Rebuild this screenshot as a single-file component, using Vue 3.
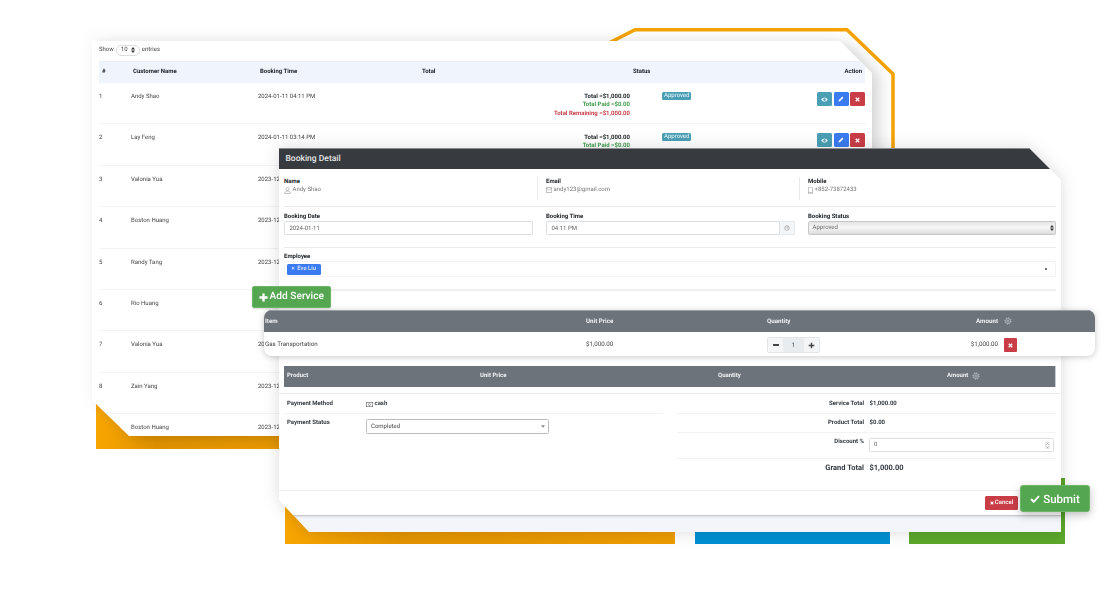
<script setup>
const rows = [
  { n: 1, name: 'Andy Shao', time: '2024-01-11 04:11 PM', full: true },
  { n: 2, name: 'Lay Feng', time: '2024-01-11 03:14 PM', full: true },
  { n: 3, name: 'Valonia Yua', time: '2023-12-28 05:20 PM' },
  { n: 4, name: 'Boston Huang', time: '2023-12-27 02:41 PM' },
  { n: 5, name: 'Randy Tang', time: '2023-12-26 11:05 AM' },
  { n: 6, name: 'Rio Huang', time: '2023-12-22 03:32 PM' },
  { n: 7, name: 'Valonia Yua', time: '2023-12-21 10:48 AM' },
  { n: 8, name: 'Zain Yang', time: '2023-12-20 04:15 PM' },
  { n: '', name: 'Boston Huang', time: '2023-12-19 01:27 PM' }
]
</script>

<template>
  <div class="stage">
    <svg class="decor" width="1111" height="615" viewBox="0 0 1111 615" aria-hidden="true">
      <defs>
        <linearGradient id="org" x1="0" y1="0" x2="1" y2="0">
          <stop offset="0" stop-color="#f7a600" />
          <stop offset="0.3" stop-color="#e39300" />
          <stop offset="1" stop-color="#ed9c00" />
        </linearGradient>
      </defs>
      <path d="M609 43 L635 29.800 L847 29.800 L893 74 L893 160" fill="none" stroke="#f5a300" stroke-width="3.500" />
      <rect x="96" y="395" width="200" height="54" fill="url(#org)" />
      <rect x="285" y="495" width="390" height="49" fill="url(#org)" />
      <rect x="695" y="520" width="195" height="24" fill="#0090d2" />
      <rect x="909" y="478" width="156" height="66" fill="#5ca72b" />
    </svg>

    <div class="win win-back">
      <div class="back-panel">
        <div class="show-row">
          <span>Show</span>
          <span class="len">10 <svg width="4" height="6" viewBox="0 0 4 6"><path d="M2 0 L4 2.400 H0Z M2 6 L0 3.600 H4Z" fill="#333" /></svg></span>
          <span>entries</span>
        </div>
        <div class="t-row t-head">
          <span class="c-n">#</span>
          <span class="c-name">Customer Name</span>
          <span class="c-time">Booking Time</span>
          <span class="c-total">Total</span>
          <span class="c-status">Status</span>
          <span class="c-act">Action</span>
        </div>
        <div v-for="r in rows" :key="r.name + r.n" class="t-row t-body">
          <span class="c-n">{{ r.n }}</span>
          <span class="c-name">{{ r.name }}</span>
          <span class="c-time">{{ r.time }}</span>
          <template v-if="r.full">
            <div class="c-total sums">
              <b>Total =$1,000.00</b>
              <b class="ok">Total Paid =$0.00</b>
              <b class="bad">Total Remaining =$1,000.00</b>
            </div>
            <div class="c-status"><span class="badge">Approved</span></div>
            <div class="c-act btns">
              <span class="ib teal"><svg width="7" height="5" viewBox="0 0 16 12"><path d="M8 1C4.500 1 1.800 3.200 0 6c1.800 2.800 4.500 5 8 5s6.200-2.200 8-5c-1.800-2.800-4.500-5-8-5zm0 8a3 3 0 110-6 3 3 0 010 6z" fill="#e8f3f6" /></svg></span>
              <span class="ib blue"><svg width="6" height="6" viewBox="0 0 12 12"><path d="M1 11l.7-3L8.500 1.200l2.300 2.300L4 10.300z" fill="#fff" /></svg></span>
              <span class="ib red"><svg width="5" height="5" viewBox="0 0 10 10"><path d="M1.500 1.500l7 7M8.500 1.500l-7 7" stroke="#fff" stroke-width="2.600" /></svg></span>
            </div>
          </template>
        </div>
      </div>
    </div>

    <div class="win win-front">
      <div class="front-panel">
        <div class="front-head">Booking Detail</div>
        <div class="front-white">
          <div class="info grid3">
            <div class="cell">
              <b>Name</b>
              <span class="val"><svg width="7" height="7" viewBox="0 0 14 14"><circle cx="7" cy="4" r="3" fill="none" stroke="#888" /><path d="M1 13c0-3 2.500-4.500 6-4.500s6 1.500 6 4.500z" fill="none" stroke="#888" /></svg>Andy Shao</span>
            </div>
            <div class="cell">
              <b>Email</b>
              <span class="val"><svg width="6" height="6" viewBox="0 0 12 12"><rect x=".5" y="1.500" width="11" height="9" fill="none" stroke="#888" /><path d="M.5 2l5.500 4.500L11.500 2" fill="none" stroke="#888" /></svg>andy123@gmail.com</span>
            </div>
            <div class="cell last">
              <b>Mobile</b>
              <span class="val"><svg width="5" height="7" viewBox="0 0 10 14"><rect x="1" y=".5" width="8" height="13" rx="1" fill="none" stroke="#888" /><path d="M1 11h8" stroke="#888" /></svg>+852-73872433</span>
            </div>
          </div>
          <div class="hr hr-a"></div>

          <div class="grid3 fields">
            <div class="field">
              <b>Booking Date</b>
              <div class="inp">2024-01-11</div>
            </div>
            <div class="field">
              <b>Booking Time</b>
              <div class="group">
                <div class="inp flat">04:11 PM</div>
                <span class="addon"><svg width="6" height="6" viewBox="0 0 12 12"><circle cx="6" cy="6" r="4.500" fill="none" stroke="#888" stroke-width="1.200" /><path d="M6 3.500V6h2.200" fill="none" stroke="#888" /></svg></span>
              </div>
            </div>
            <div class="field last">
              <b>Booking Status</b>
              <div class="inp sel">Approved<svg width="4" height="6" viewBox="0 0 4 6"><path d="M2 0 L4 2.400 H0Z M2 6 L0 3.600 H4Z" fill="#333" /></svg></div>
            </div>
          </div>
          <div class="hr hr-b"></div>

          <div class="emp">
            <b>Employee</b>
            <div class="emp-box"><span class="chip"><i>×</i>Eve Liu</span><span class="dot"></span></div>
          </div>
          <div class="hr hr-c"></div>

          <div class="prod-head">
            <span>Product</span>
            <span>Unit Price</span>
            <span>Quantity</span>
            <span class="amt">Amount</span>
            <svg class="gear" width="8" height="8" viewBox="0 0 16 16"><circle cx="8" cy="8" r="2" fill="none" stroke="#dfe2e5" /><circle cx="8" cy="8" r="5" fill="none" stroke="#dfe2e5" /><circle cx="8" cy="8" r="6.500" fill="none" stroke="#dfe2e5" stroke-width="1.500" stroke-dasharray="1.700 3.400" /></svg>
          </div>
          <div class="hr hr-full"></div>

          <div class="pay">
            <div class="pay-left">
              <div class="pl-row line">
                <b class="pl-label">Payment Method</b>
                <b class="pl-val"><svg width="7" height="5" viewBox="0 0 14 10"><rect x=".5" y=".5" width="13" height="9" fill="none" stroke="#444" /><circle cx="7" cy="5" r="2" fill="none" stroke="#444" /></svg>cash</b>
              </div>
              <div class="pl-row status">
                <b class="pl-label">Payment Status</b>
                <div class="inp pay-sel">Completed<svg width="4" height="3" viewBox="0 0 8 5"><path d="M0 0h8L4 5z" fill="#888" /></svg></div>
              </div>
            </div>
            <div class="pay-right">
              <div class="pr-row h19 line"><b>Service Total</b><b class="v">$1,000.00</b></div>
              <div class="pr-row h19 line"><b>Product Total</b><b class="v">$0.00</b></div>
              <div class="pr-row h26 line disc">
                <b>Discount %</b>
                <div class="inp num">0<svg width="5" height="7" viewBox="0 0 10 14"><rect x=".5" y=".5" width="9" height="13" rx="3" fill="#f4f4f4" stroke="#ccc" /><path d="M3 5l2-2 2 2M3 9l2 2 2-2" fill="none" stroke="#555" /></svg></div>
              </div>
              <div class="pr-row grand"><b>Grand Total</b><b class="v">$1,000.00</b></div>
            </div>
          </div>
          <div class="hr hr-foot"></div>
          <div class="foot">
            <span class="cancel"><svg width="4" height="4" viewBox="0 0 10 10"><path d="M1.500 1.500l7 7M8.500 1.500l-7 7" stroke="#fff" stroke-width="2.600" /></svg>Cancel</span>
          </div>
        </div>
      </div>
    </div>

    <div class="service-card">
      <div class="svc-row svc-head">
        <span>Item</span>
        <span>Unit Price</span>
        <span>Quantity</span>
        <span class="amt">Amount</span>
        <svg width="8" height="8" viewBox="0 0 16 16"><circle cx="8" cy="8" r="2" fill="none" stroke="#dfe2e5" /><circle cx="8" cy="8" r="5" fill="none" stroke="#dfe2e5" /><circle cx="8" cy="8" r="6.500" fill="none" stroke="#dfe2e5" stroke-width="1.500" stroke-dasharray="1.700 3.400" /></svg>
      </div>
      <div class="svc-row svc-body">
        <span>Gas Transportation</span>
        <span>$1,000.00</span>
        <div class="stepper">
          <span class="st-b"><i class="minus"></i></span>
          <span class="st-v">1</span>
          <span class="st-b"><svg width="7" height="7" viewBox="0 0 10 10"><path d="M5 1v8M1 5h8" stroke="#444" stroke-width="2" /></svg></span>
        </div>
        <span class="amt">$1,000.00</span>
        <span class="del"><svg width="5" height="5" viewBox="0 0 10 10"><path d="M1.500 1.500l7 7M8.500 1.500l-7 7" stroke="#fff" stroke-width="2.600" /></svg></span>
      </div>
    </div>

    <div class="float-btn add"><svg width="9" height="9" viewBox="0 0 10 10"><path d="M5 .5v9M.5 5h9" stroke="#fff" stroke-width="2.600" /></svg>Add Service</div>
    <div class="float-btn submit"><svg width="10" height="8" viewBox="0 0 12 10"><path d="M1 5l3.500 3.500L11 1.500" fill="none" stroke="#fff" stroke-width="2.400" /></svg>Submit</div>
  </div>
</template>

<style>
html, body { margin: 0; background: #fff; }
</style>

<style scoped>
.stage {
  position: relative;
  width: 1111px;
  height: 615px;
  overflow: hidden;
  background: #fff;
  font-family: Roboto, "Liberation Sans", sans-serif;
  font-size: 6px;
  line-height: 8px;
  color: #343a40;
  text-rendering: geometricPrecision;
}
b { font-weight: 700; color: #212529; }
.decor { position: absolute; left: 0; top: 0; }
.win { position: absolute; }

/* back window */
.win-back {
  left: 92px; top: 41px;
  filter: drop-shadow(0 -2px 8px rgba(0,0,0,.05)) drop-shadow(9px 4px 7px rgba(0,0,0,.13));
}
.back-panel {
  width: 780px; height: 395px;
  background: #fff;
  box-sizing: border-box;
  padding-left: 7px;
  overflow: hidden;
  clip-path: polygon(0 0, 748px 0, 780px 32px, 780px 395px, 37px 395px, 0 359px);
}
.show-row { display: flex; align-items: center; gap: 2px; height: 19.500px; padding: 2.500px 0 3.500px; box-sizing: border-box; color: #444; }
.len { display: flex; align-items: center; justify-content: space-between; box-sizing: border-box; width: 24px; height: 11px; padding: 0 4px 0 4px; border: 1px solid #ddd; border-radius: 5px; }
.t-row { display: grid; grid-template-columns: 32px 127px 164px 211px 110px 122px; width: 766px; position: relative; }
.t-head { height: 22.500px; background: #f0f4fd; align-items: center; font-weight: 700; color: #212529; border-top: 1px solid #e9ecf2; box-sizing: border-box; }
.t-head .c-n { padding-left: 3px; }
.t-head .c-name, .t-head .c-time { padding-left: 2px; }
.t-head .c-act { justify-self: end; padding-right: 3px; }
.t-body { height: 41.400px; box-sizing: border-box; padding-top: 9px; border-bottom: 1px solid #f3f3f5; color: #444; }
.t-body .c-n, .t-body .c-name, .t-body .c-time { padding-top: 1px; }
.sums { display: flex; flex-direction: column; align-items: flex-end; padding: .5px 3px 0 0; line-height: 8.500px; }
.sums .ok { color: #3f9b4b; }
.sums .bad { color: #c93d47; }
.c-status { padding-left: 29px; }
.t-head .c-status { padding-left: 0; }
.badge { display: inline-block; padding: 0 2px; height: 8px; line-height: 8px; background: #4a9fb5; color: #f4fafb; border-radius: 1.500px; font-size: 6px; vertical-align: top; }
.btns { display: flex; justify-content: flex-end; gap: 1.500px; }
.ib { width: 15px; height: 14px; border-radius: 1.500px; display: flex; align-items: center; justify-content: center; }
.teal { background: #4a9fb5; }
.blue { background: #3a7bf2; }
.red { background: #c93d47; }

/* front window */
.win-front {
  left: 279px; top: 148px;
  filter: drop-shadow(0 0 8px rgba(0,0,0,.14));
}
.front-panel {
  width: 782px; height: 384px;
  background: #f3f5fa;
  clip-path: polygon(0 0, 750px 0, 782px 32px, 782px 384px, 30px 384px, 0 352px);
}
.front-head {
  height: 21px; line-height: 20px;
  background: #373b3f;
  border-top: 1px solid #8a8d90;
  box-sizing: border-box;
  padding-left: 6.500px;
  color: #e6e7e8;
  font-size: 8.500px;
  font-weight: 500;
}
.front-white {
  height: 347px;
  box-sizing: border-box;
  background: #fff;
  padding: 8px 5px 0;
  border-bottom: 1px solid #c8cacc;
  box-shadow: 0 1px 2px rgba(0,0,0,.1);
}
.grid3 { display: grid; grid-template-columns: 254px 254px 248px; column-gap: 8px; }
.info { height: 23px; }
.cell { display: flex; flex-direction: column; border-right: 1px solid #e9e9e9; padding-top: 1px; box-sizing: border-box; }
.cell.last { border-right: 0; }
.val { display: flex; align-items: center; gap: 1.500px; color: #777; }
.hr { background: #ececec; height: 1px; }
.hr-a { margin-top: 6px; }
.fields { padding-top: 6px; }
.field { padding-right: 5px; display: flex; flex-direction: column; }
.field.last { padding-right: 0; }
.inp {
  box-sizing: border-box;
  height: 14px;
  line-height: 13.500px;
  border: 1px solid #dcdfe2;
  border-radius: 1.500px;
  padding-left: 4.500px;
  color: #666;
  background: #fff;
}
.group { display: flex; }
.flat { flex: 1; border-radius: 1.500px 0 0 1.500px; }
.addon { width: 15px; height: 14px; box-sizing: border-box; background: #f4f5f6; border: 1px solid #e6e8ea; border-left: 0; display: flex; align-items: center; justify-content: center; }
.sel {
  display: flex; align-items: center; justify-content: space-between;
  padding: 0 1.500px 0 3.500px;
  background: linear-gradient(#e4e4e4, #f6f6f6 45%, #dcdcdc);
  border-color: #c6c6c6;
  color: #666;
}
.hr-b { margin-top: 12px; }
.emp { padding-top: 5px; }
.emp b { display: block; }
.emp-box { height: 16px; box-sizing: border-box; border: 1px solid #f3f3f4; border-radius: 1.500px; display: flex; align-items: center; justify-content: space-between; padding: 0 8px 0 2px; }
.chip { display: flex; align-items: center; height: 11px; width: 34px; box-sizing: border-box; padding-left: 4.500px; gap: 2.500px; background: #3a7bf2; color: #fff; border-radius: 1.500px; }
.chip i { font-style: normal; }
.dot { width: 2px; height: 2px; background: #444; border-radius: 50%; }
.hr-c { margin-top: 12px; height: 1.500px; background: #efefef; }

.prod-head {
  margin-top: 75px;
  height: 21.500px;
  background: #6c737b;
  border-right: 1px solid #c9ccd0;
  box-sizing: border-box;
  display: grid;
  grid-template-columns: 193px 238px 229px 25px auto;
  justify-content: start;
  align-items: center;
  padding-left: 3px;
  color: #f1f2f3;
  font-weight: 700;
}
.prod-head .amt { justify-self: start; }
.hr-full { margin: 5.500px -5px 0; }

.pay { display: flex; justify-content: space-between; height: 96px; padding-top: 1px; box-sizing: border-box; }
.pay-left { width: 379px; }
.pay-right { width: 379px; }
.pl-row { display: flex; }
.pl-row.line { height: 19px; align-items: center; box-sizing: border-box; padding-top: 1px; }
.pl-label { width: 82px; padding-left: 3px; box-sizing: border-box; color: #343a40; }
.pl-val { display: flex; align-items: center; gap: 1.500px; color: #343a40; }
.pl-row.status { padding-top: 5.500px; }
.pay-sel {
  width: 183px; height: 14.500px;
  display: flex; align-items: center; justify-content: space-between;
  padding: 0 3.500px 0 4px;
  border-color: #bcbcbc;
  color: #444;
}
.pr-row { display: flex; box-sizing: border-box; }
.pr-row b:first-child { width: 187px; text-align: right; color: #343a40; flex: none; }
.pr-row .v { margin-left: 5.500px; color: #343a40; }
.h19 { height: 19px; align-items: center; padding-top: 1px; }
.h26 { height: 26px; padding-top: 5.500px; }
.line { border-bottom: 1px solid #f3f3f4; }
.num {
  width: 185px; height: 14px;
  margin-left: 5px;
  display: flex; align-items: center; justify-content: space-between;
  padding: 0 3px 0 4px;
}
.grand { height: 18px; align-items: center; font-size: 7.500px; }
.grand b:first-child { font-size: 7.500px; }
.grand .v { font-size: 7.500px; }
.hr-foot { margin: 0 -5px; height: 1.500px; background: #f0f0f1; }
.foot { display: flex; justify-content: flex-end; padding: 4.500px 38px 0 0; }
.cancel { width: 33px; height: 14px; border-radius: 1.500px; background: #c93d47; color: #fff; font-weight: 500; display: flex; align-items: center; justify-content: center; gap: 1px; }

/* service card */
.service-card {
  position: absolute;
  left: 264px; top: 310px;
  width: 831px; height: 46px;
  border-radius: 8px;
  background: #fff;
  overflow: hidden;
  box-shadow: 0 1px 6px rgba(0,0,0,.22);
}
.svc-row { display: grid; grid-template-columns: 321px 181px 209px 22px auto; align-items: center; padding-left: 1px; font-size: 6.200px; }
.svc-head { height: 22px; background: #6c737b; color: #f1f2f3; font-weight: 700; border-top: 1px solid #9a9ea3; box-sizing: border-box; }
.svc-head span { position: relative; top: -1px; }
.svc-head .amt { justify-self: end; }
.svc-head svg { margin-left: 6px; position: relative; top: -1px; }
.svc-body { height: 24px; color: #444; }
.svc-body .amt { justify-self: end; white-space: nowrap; }
.del { width: 13px; height: 13.500px; background: #c93d47; border-radius: 1px; display: flex; align-items: center; justify-content: center; margin-left: 6px; margin-top: 2px; }
.stepper { display: flex; width: 53px; height: 15.500px; border: 1px solid #e2e4e6; border-radius: 2px; box-sizing: border-box; margin-top: 2px; }
.st-b { width: 15px; background: #f4f5f6; display: flex; align-items: center; justify-content: center; }
.st-v { flex: 1; background: #e9ecef; text-align: center; line-height: 14px; }
.minus { display: block; width: 6px; height: 2px; background: #444; }

/* floating buttons */
.float-btn {
  position: absolute;
  display: flex; align-items: center; justify-content: center;
  background: #55a651;
  color: #fff;
  border: 1px solid #6db569;
  box-sizing: border-box;
  border-radius: 2px;
  font-weight: 500;
}
.add { left: 252px; top: 286px; width: 79px; height: 22px; font-size: 10.200px; gap: 1.500px; box-shadow: 0 1px 2px rgba(0,0,0,.15); }
.submit { left: 1020px; top: 485px; width: 70px; height: 27px; font-size: 11.500px; gap: 3px; border-radius: 3px; box-shadow: 0 3px 9px rgba(0,0,0,.25); }
</style>
